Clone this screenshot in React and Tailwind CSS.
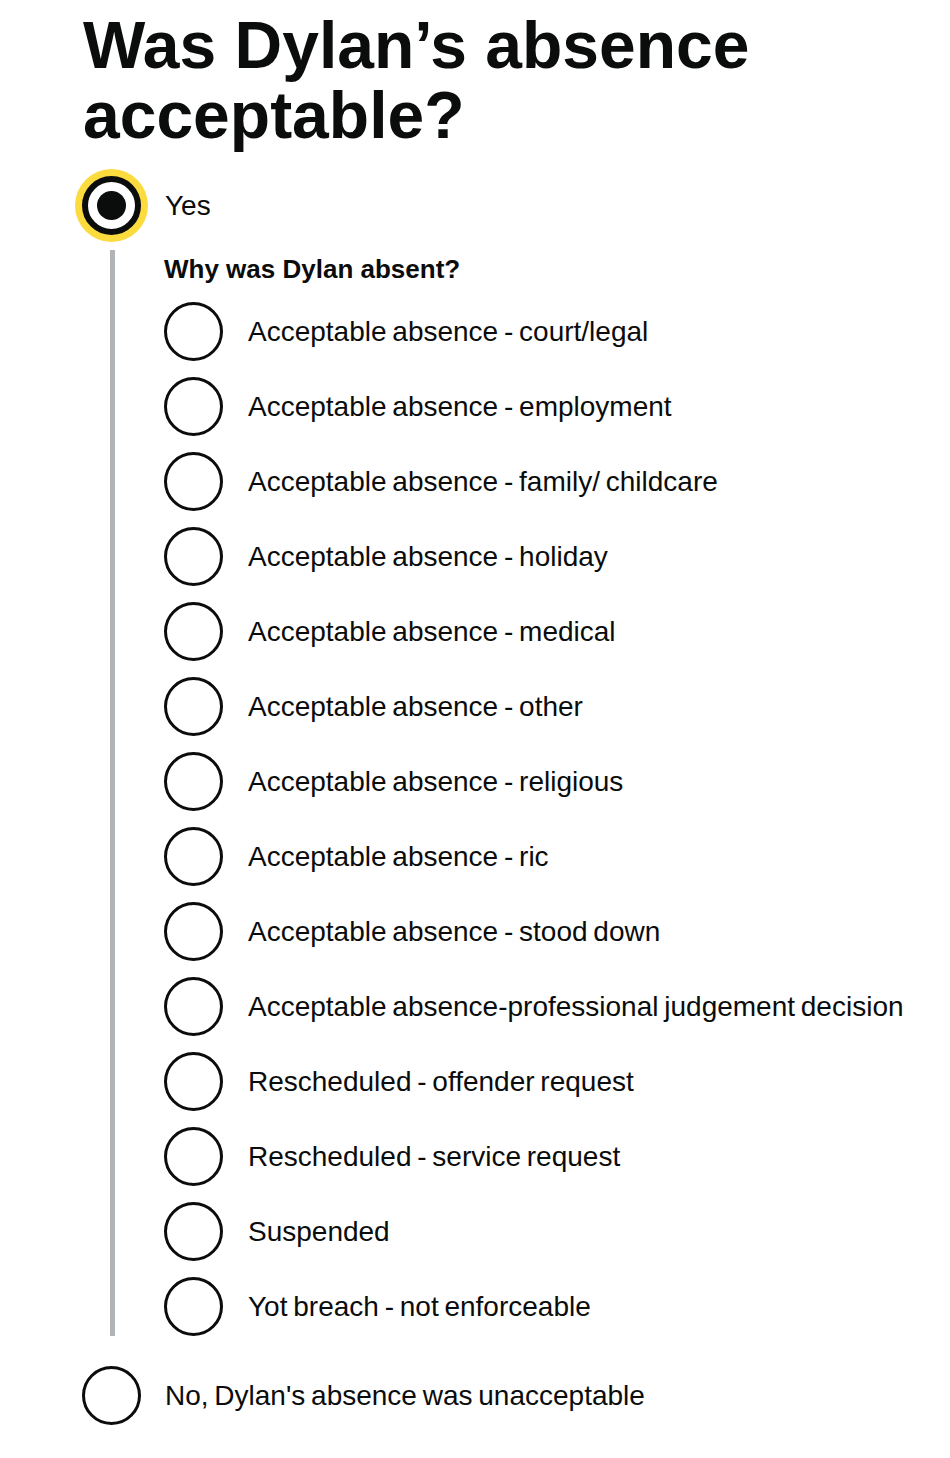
import React from 'react';

const reasons = [
    'Acceptable absence - court/legal',
    'Acceptable absence - employment',
    'Acceptable absence - family/ childcare',
    'Acceptable absence - holiday',
    'Acceptable absence - medical',
    'Acceptable absence - other',
    'Acceptable absence - religious',
    'Acceptable absence - ric',
    'Acceptable absence - stood down',
    'Acceptable absence-professional judgement decision',
    'Rescheduled - offender request',
    'Rescheduled - service request',
    'Suspended',
    'Yot breach - not enforceable',
];

const Radio = ({ label, checked = false, gap = 'gap-[24px]' }) => (
    <label className={`flex items-center ${gap} cursor-pointer`}>
        {checked ? (
            <span className="flex h-[59px] w-[59px] shrink-0 items-center justify-center rounded-full border-[6px] border-[#0b0c0c] bg-white shadow-[0_0_0_7px_#fcdb3f]">
                <span className="h-[29px] w-[29px] rounded-full bg-[#0b0c0c]"></span>
            </span>
        ) : (
            <span className="h-[59px] w-[59px] shrink-0 rounded-full border-[3px] border-[#0b0c0c] bg-white"></span>
        )}
        <span className="whitespace-nowrap text-[28px] leading-[32px] text-[#0b0c0c] [word-spacing:-2px]">{label}</span>
    </label>
);

const App = () => {
    return (
        <div className="min-h-[1458px] bg-white pl-[82px] font-['Liberation_Sans',Arial,sans-serif] text-[#0b0c0c]">
            <h1 className="pt-[10px] pl-[1px] text-[66px] font-bold leading-[70px]">
                Was Dylan’s absence
                <br />
                acceptable?
            </h1>

            <div className="mt-[26px]">
                <Radio label="Yes" checked />
            </div>

            {/* conditional reveal */}
            <div className="ml-[28px] mt-[15px] border-l-[5px] border-[#b1b4b6] pl-[49px]">
                <p className="pt-[4px] text-[26px] font-bold leading-[30px]">Why was Dylan absent?</p>
                <div className="mt-[18px] flex flex-col gap-[16px]">
                    {reasons.map((r) => (
                        <Radio key={r} label={r} gap="gap-[25px]" />
                    ))}
                </div>
            </div>

            <div className="mt-[30px]">
                <Radio label="No, Dylan's absence was unacceptable" />
            </div>
        </div>
    );
};

export default App;
